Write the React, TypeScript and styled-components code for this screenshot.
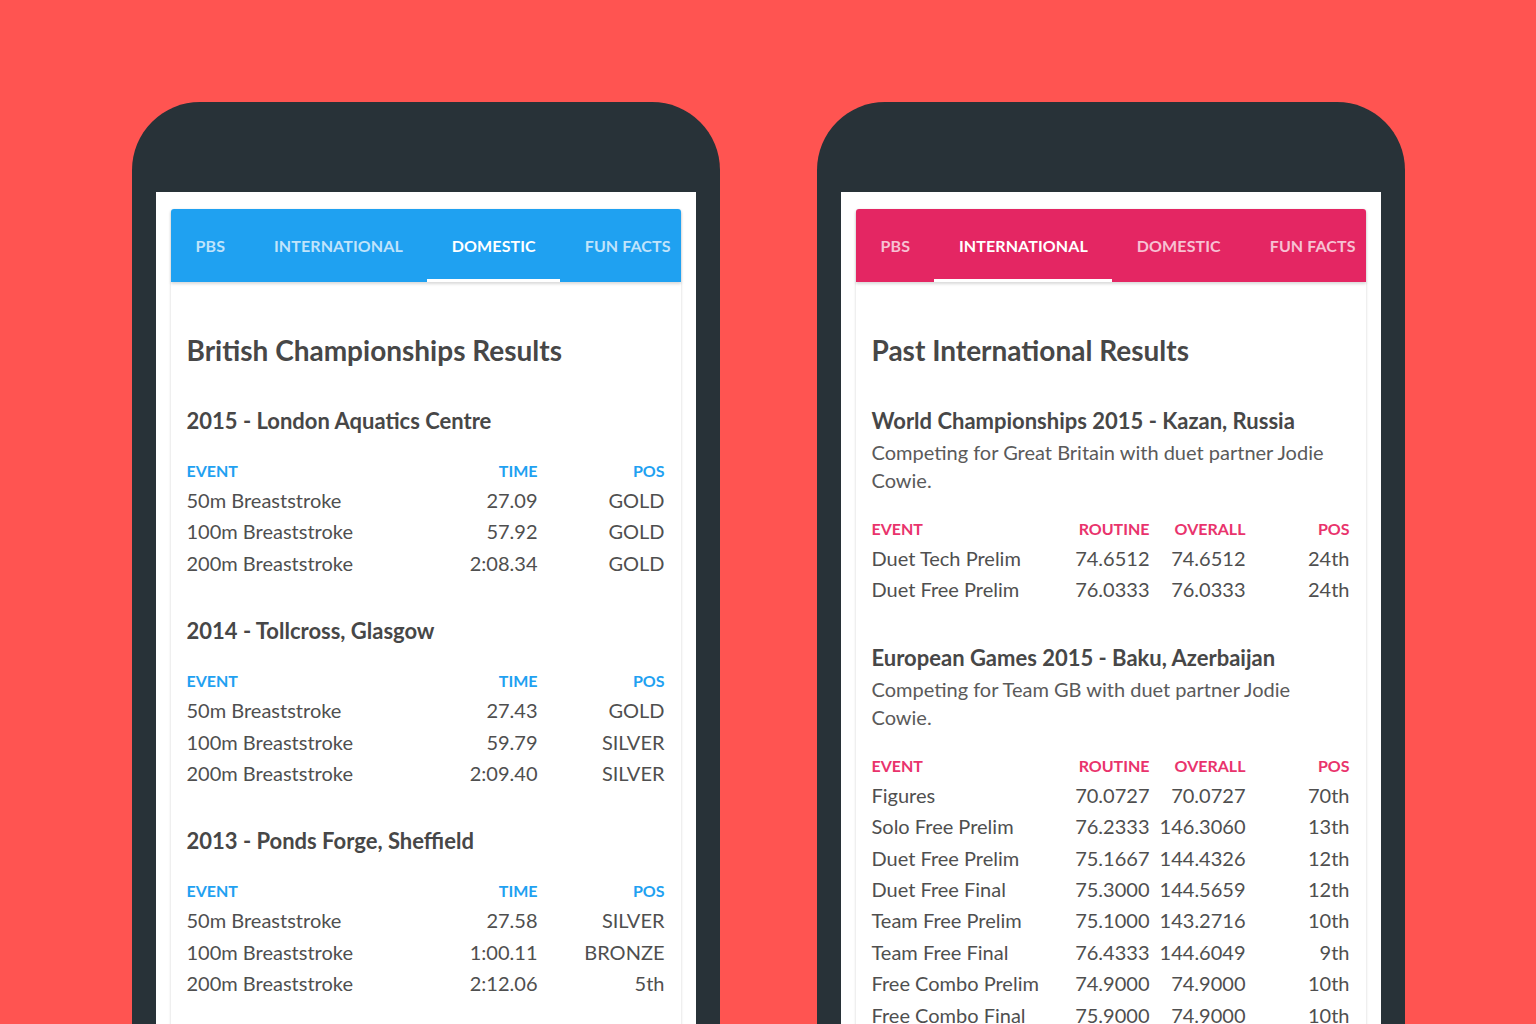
import React from "react";
import styled, { createGlobalStyle } from "styled-components";

const GlobalStyle = createGlobalStyle`
  html, body {
    margin: 0;
    padding: 0;
    background: #ff5451;
    font-family: Lato, "Noto Sans", sans-serif;
    -webkit-font-smoothing: antialiased;
  }
`;

const Stage = styled.div`
  height: 1024px;
  overflow: hidden;
  display: flex;
  justify-content: center;
  gap: 97px;
  padding-top: 102px;
  box-sizing: border-box;
`;

const Phone = styled.div`
  width: 588px;
  height: 1000px;
  flex: none;
  background: #283238;
  border-radius: 68px 68px 0 0;
  padding: 90px 24px 0;
  box-sizing: border-box;
`;

const Screen = styled.div`
  background: #ffffff;
  height: 100%;
  padding: 17px 15px 0;
  box-sizing: border-box;
`;

const Card = styled.div`
  background: #ffffff;
  border-radius: 3px 3px 0 0;
  box-shadow: 0 1px 3px rgba(0, 0, 0, 0.18);
  height: 100%;
`;

const TabBar = styled.div<{ $color: string }>`
  display: flex;
  height: 73px;
  background: ${(p) => p.$color};
  border-radius: 3px 3px 0 0;
  overflow: hidden;
  box-shadow: 0 2px 3px rgba(0, 0, 0, 0.15);
  position: relative;
`;

const Tab = styled.div<{ $active: boolean }>`
  flex: none;
  display: flex;
  align-items: center;
  padding: 3px 24px 0 25px;
  font-size: 16px;
  font-weight: 700;
  letter-spacing: 0.1px;
  text-transform: uppercase;
  color: ${(p) => (p.$active ? "#ffffff" : "rgba(255, 255, 255, 0.72)")};
  border-bottom: 3px solid ${(p) => (p.$active ? "#ffffff" : "transparent")};
  box-sizing: border-box;
  white-space: nowrap;
`;

const Body = styled.div`
  padding: 50px 16px 0;
`;

const Title = styled.h1`
  margin: 0 0 38px;
  font-size: 28px;
  line-height: 36px;
  font-weight: 700;
  color: #474747;
`;

const Section = styled.section`
  margin-bottom: 37px;
`;

const SectionTitle = styled.h2`
  margin: 0;
  font-size: 22px;
  line-height: 30px;
  font-weight: 700;
  color: #474747;
`;

const Note = styled.p`
  margin: 2px 0 0;
  font-size: 20px;
  line-height: 28px;
  color: #5a5a5a;
`;

const Table = styled.div<{ $cols: string }>`
  display: grid;
  grid-template-columns: ${(p) => p.$cols};
  margin-top: 21px;
`;

const HeadCell = styled.div<{ $color: string; $right?: boolean }>`
  height: 28px;
  line-height: 28px;
  font-size: 16px;
  font-weight: 700;
  color: ${(p) => p.$color};
  text-align: ${(p) => (p.$right ? "right" : "left")};
`;

const Cell = styled.div<{ $right?: boolean }>`
  height: 31.4px;
  line-height: 31.4px;
  font-size: 20px;
  color: #4f4f4f;
  text-align: ${(p) => (p.$right ? "right" : "left")};
  white-space: nowrap;
`;

type Result = {
  title: string;
  note?: string;
  rows: string[][];
};

const TABS = ["PBS", "International", "Domestic", "Fun Facts"];

const domestic: Result[] = [
  {
    title: "2015 - London Aquatics Centre",
    rows: [
      ["50m Breaststroke", "27.09", "GOLD"],
      ["100m Breaststroke", "57.92", "GOLD"],
      ["200m Breaststroke", "2:08.34", "GOLD"],
    ],
  },
  {
    title: "2014 - Tollcross, Glasgow",
    rows: [
      ["50m Breaststroke", "27.43", "GOLD"],
      ["100m Breaststroke", "59.79", "SILVER"],
      ["200m Breaststroke", "2:09.40", "SILVER"],
    ],
  },
  {
    title: "2013 - Ponds Forge, Sheffield",
    rows: [
      ["50m Breaststroke", "27.58", "SILVER"],
      ["100m Breaststroke", "1:00.11", "BRONZE"],
      ["200m Breaststroke", "2:12.06", "5th"],
    ],
  },
];

const international: Result[] = [
  {
    title: "World Championships 2015 - Kazan, Russia",
    note: "Competing for Great Britain with duet partner Jodie Cowie.",
    rows: [
      ["Duet Tech Prelim", "74.6512", "74.6512", "24th"],
      ["Duet Free Prelim", "76.0333", "76.0333", "24th"],
    ],
  },
  {
    title: "European Games 2015 - Baku, Azerbaijan",
    note: "Competing for Team GB with duet partner Jodie Cowie.",
    rows: [
      ["Figures", "70.0727", "70.0727", "70th"],
      ["Solo Free Prelim", "76.2333", "146.3060", "13th"],
      ["Duet Free Prelim", "75.1667", "144.4326", "12th"],
      ["Duet Free Final", "75.3000", "144.5659", "12th"],
      ["Team Free Prelim", "75.1000", "143.2716", "10th"],
      ["Team Free Final", "76.4333", "144.6049", "9th"],
      ["Free Combo Prelim", "74.9000", "74.9000", "10th"],
      ["Free Combo Final", "75.9000", "74.9000", "10th"],
    ],
  },
];

interface ResultsCardProps {
  color: string;
  headColor: string;
  activeTab: number;
  title: string;
  columns: string[];
  cols: string;
  results: Result[];
}

const ResultsCard: React.FC<ResultsCardProps> = ({
  color,
  headColor,
  activeTab,
  title,
  columns,
  cols,
  results,
}) => (
  <Phone>
    <Screen>
      <Card>
        <TabBar $color={color}>
          {TABS.map((tab, i) => (
            <Tab key={tab} $active={i === activeTab}>
              {tab}
            </Tab>
          ))}
        </TabBar>
        <Body>
          <Title>{title}</Title>
          {results.map((result) => (
            <Section key={result.title}>
              <SectionTitle>{result.title}</SectionTitle>
              {result.note && <Note>{result.note}</Note>}
              <Table $cols={cols}>
                {columns.map((col, i) => (
                  <HeadCell key={col} $color={headColor} $right={i > 0}>
                    {col}
                  </HeadCell>
                ))}
                {result.rows.map((row) =>
                  row.map((value, i) => (
                    <Cell key={row[0] + i} $right={i > 0}>
                      {value}
                    </Cell>
                  ))
                )}
              </Table>
            </Section>
          ))}
        </Body>
      </Card>
    </Screen>
  </Phone>
);

const App: React.FC = () => (
  <>
    <GlobalStyle />
    <Stage>
      <ResultsCard
        color="#1fa1f1"
        headColor="#1fa1f1"
        activeTab={2}
        title="British Championships Results"
        columns={["EVENT", "TIME", "POS"]}
        cols="1fr 110px 127px"
        results={domestic}
      />
      <ResultsCard
        color="#e42663"
        headColor="#e9336c"
        activeTab={1}
        title="Past International Results"
        columns={["EVENT", "ROUTINE", "OVERALL", "POS"]}
        cols="1fr 96px 96px 104px"
        results={international}
      />
    </Stage>
  </>
);

export default App;
